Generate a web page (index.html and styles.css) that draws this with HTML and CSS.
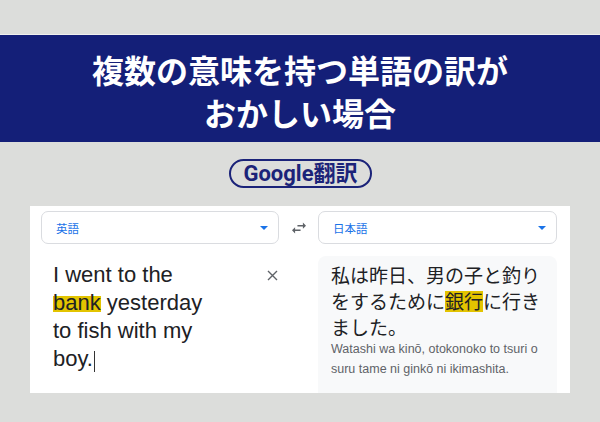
FILE: index.html
```html
<!DOCTYPE html>
<html lang="ja">
<head>
<meta charset="utf-8">
<title>Google翻訳</title>
<link rel="stylesheet" href="styles.css">
</head>
<body>
<header class="banner">
  <h1 class="title">複数の意味を持つ単語の訳が<br>おかしい場合</h1>
</header>
<div class="badge-row">
  <div class="badge"><span class="badge-latin">Google</span>翻訳</div>
</div>
<main class="card">
  <div class="select">
    <span class="select-label">英語</span>
    <span class="caret"></span>
  </div>
  <div class="swap">
    <svg width="14" height="14" viewBox="3 3 18 18" aria-hidden="true"><path d="M6.99 11L3 15l3.99 4v-3H14v-2H6.99v-3zM21 9l-3.99-4v3H10v2h7.01v3L21 9z" fill="#5f6368"/></svg>
  </div>
  <div class="select">
    <span class="select-label">日本語</span>
    <span class="caret"></span>
  </div>
  <div class="source">
    <p class="source-text">I went to the<br><span class="hl-en">bank</span> yesterday<br>to fish with my<br>boy.<span class="cursor"></span></p>
    <svg class="clear" width="11" height="11" viewBox="0 0 11 11" aria-hidden="true"><path d="M1 1L10 10M10 1L1 10" stroke="#5f6368" stroke-width="1.4" fill="none"/></svg>
  </div>
  <div class="spacer"></div>
  <div class="target">
    <p class="target-text">私は昨日、男の子と釣り<br>をするために<span class="hl-ja">銀行</span>に行き<br>ました。</p>
    <p class="roman">Watashi wa kinō, otokonoko to tsuri o<br>suru tame ni ginkō ni ikimashita.</p>
  </div>
</main>
</body>
</html>
```

FILE: styles.css
```css
html, body {
  margin: 0;
  padding: 0;
}
body {
  width: 600px;
  height: 422px;
  background: #dcdddb;
  overflow: hidden;
  font-family: "Liberation Sans", Arial, "Noto Sans CJK JP", sans-serif;
}
.banner {
  margin-top: 35px;
  height: 107px;
  box-sizing: border-box;
  padding-top: 13px;
  background: #141f78;
  box-shadow: 0 -1px 0 #f0f0ee;
}
.title {
  margin: 0;
  text-align: center;
  color: #ffffff;
  font-family: "Noto Sans CJK JP", sans-serif;
  font-weight: 700;
  font-size: 32px;
  line-height: 43px;
  letter-spacing: 0;
}
.badge-row {
  display: flex;
  justify-content: center;
  padding-top: 17px;
}
.badge {
  width: 143px;
  height: 29px;
  box-sizing: border-box;
  border: 2px solid #1b2379;
  border-radius: 15px;
  display: flex;
  align-items: center;
  justify-content: center;
  color: #1b2379;
  font-family: Roboto, "Noto Sans CJK JP", sans-serif;
  font-weight: 700;
  font-size: 22px;
  line-height: 1;
  margin-left: 1px;
}
.badge-latin {
  font-family: Roboto, sans-serif;
}
.card {
  margin: 18px 0 0 30px;
  width: 540px;
  height: 187px;
  box-sizing: border-box;
  background: #ffffff;
  padding: 5px 13px 0 11px;
  display: grid;
  grid-template-columns: 238px 39px 239px;
  grid-template-rows: 33px 1fr;
  row-gap: 12px;
}
.select {
  border: 1px solid #dadce0;
  border-radius: 7px;
  box-sizing: border-box;
  display: flex;
  align-items: center;
  justify-content: space-between;
  padding: 0 10px 0 14px;
}
.select-label {
  color: #1a73e8;
  font-family: "Noto Sans CJK JP", sans-serif;
  font-size: 11.5px;
}
.caret {
  width: 0;
  height: 0;
  border-left: 4px solid transparent;
  border-right: 4px solid transparent;
  border-top: 4px solid #1a73e8;
}
.swap {
  display: flex;
  align-items: center;
  justify-content: center;
  padding-left: 1px;
}
.source {
  position: relative;
  padding: 5px 0 0 12px;
}
.source-text {
  margin: 0;
  color: #202124;
  font-family: "Liberation Sans", Arial, sans-serif;
  font-size: 22px;
  line-height: 28px;
}
.hl-en {
  background: linear-gradient(to bottom, transparent 6px, #e3c400 6px, #e3c400 22.5px, transparent 22.5px);
}
.cursor {
  display: inline-block;
  width: 1px;
  height: 21px;
  background: #333333;
  vertical-align: -6px;
  margin-left: 1px;
}
.clear {
  position: absolute;
  top: 14px;
  right: 1px;
}
.target {
  background: #f8f9fa;
  border-radius: 8px 8px 0 0;
  padding: 6px 10px 0 13px;
}
.target-text {
  margin: 0;
  color: #202124;
  font-family: "Noto Sans CJK JP", sans-serif;
  font-size: 19px;
  line-height: 26px;
}
.hl-ja {
  background: linear-gradient(to bottom, transparent 4px, #e3c400 4px, #e3c400 25px, transparent 25px);
}
.roman {
  margin: -1px 0 0 0;
  color: #5f6368;
  font-family: "Liberation Sans", Arial, sans-serif;
  font-size: 12.5px;
  line-height: 20px;
}
```
